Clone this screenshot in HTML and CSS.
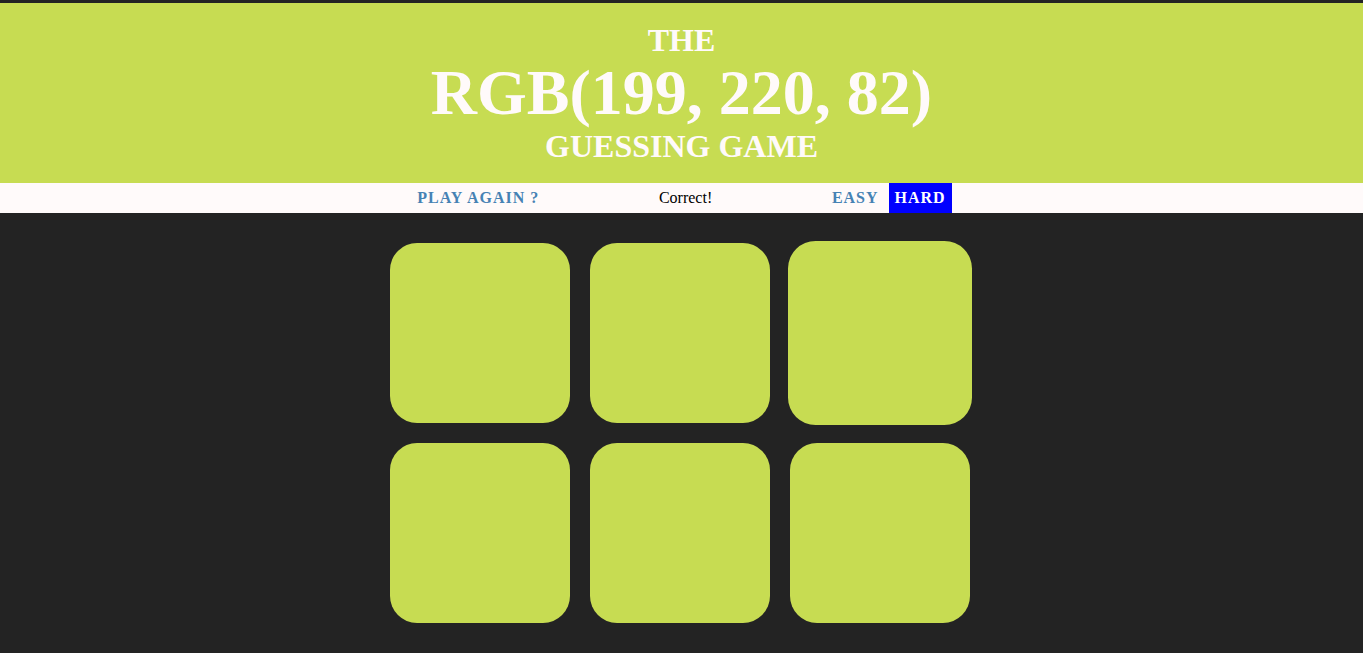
FILE: index.html
```html
<!DOCTYPE html>
<html>
<head>
<meta charset="utf-8">
<title>Color Game</title>
<link rel="stylesheet" href="styles.css">
</head>
<body>
<div class="topbar"></div>
<h1 class="title">The <span class="color-display">RGB(199, 220, 82)</span> Guessing Game</h1>
<div class="stripe"><button class="btn">Play Again ?</button> <span class="message">Correct!</span> <button class="btn">Easy</button> <button class="btn selected">Hard</button></div>
<div class="container">
  <div class="square"></div>
  <div class="square"></div>
  <div class="square hovered"></div>
  <div class="square"></div>
  <div class="square"></div>
  <div class="square"></div>
</div>
</body>
</html>
```
FILE: styles.css
```css
html, body {
  margin: 0;
  padding: 0;
}
body {
  background: #232323;
  font-family: "Liberation Serif", "Times New Roman", serif;
  font-size: 16px;
}
.topbar {
  height: 3px;
  background: #232323;
}
.title {
  box-sizing: border-box;
  height: 180px;
  margin: 0;
  padding: 20px 0 0;
  background: rgb(199, 220, 82);
  color: #fffafa;
  text-align: center;
  text-transform: uppercase;
  font-size: 32px;
  font-weight: bold;
  line-height: 1.1;
}
.color-display {
  display: block;
  font-size: 200%;
}
.stripe {
  height: 30px;
  background: #fffafa;
  text-align: center;
  color: #000;
}
.btn {
  border: none;
  background: none;
  height: 100%;
  padding: 1px 6px;
  margin: 0;
  font-family: inherit;
  font-size: inherit;
  font-weight: 700;
  text-transform: uppercase;
  letter-spacing: 1px;
  color: steelblue;
  vertical-align: top;
  cursor: pointer;
}
.btn.selected {
  color: #fff;
  background: #0000ff;
}
.message {
  display: inline-block;
  width: 20%;
  line-height: 30px;
  vertical-align: top;
}
.container {
  width: 583px;
  margin: 30px auto 0;
  display: grid;
  grid-template-columns: repeat(3, 180px);
  gap: 20px;
}
.square {
  width: 180px;
  height: 180px;
  background: rgb(199, 220, 82);
  border-radius: 15%;
}
.square.hovered {
  transform: scale(1.0222);
}
```
